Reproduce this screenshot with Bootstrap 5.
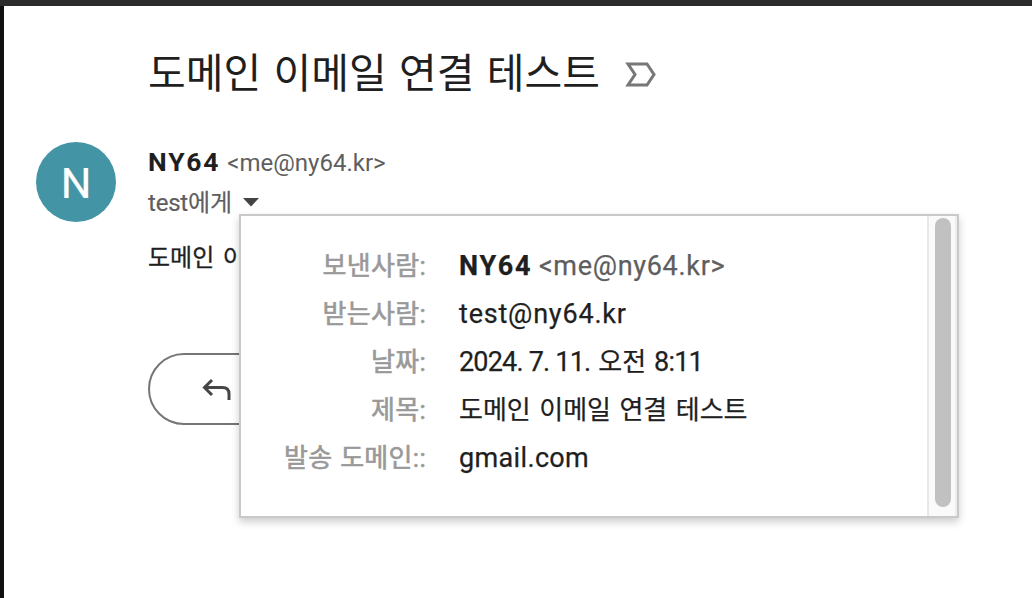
<!DOCTYPE html>
<html lang="ko">
<head>
<meta charset="utf-8">
<meta name="viewport" content="width=device-width, initial-scale=1">
<title>도메인 이메일 연결 테스트</title>
<link href="https://cdn.jsdelivr.net/npm/bootstrap@5.3.0/dist/css/bootstrap.min.css" rel="stylesheet">
<style>
body{font-family:Roboto,"Noto Sans CJK KR",sans-serif;color:#1f1f1f}
.mail-window{height:598px;background:linear-gradient(#2c2c2c 6px,transparent 6px),linear-gradient(90deg,#12100e 4px,#fff 4px);padding:44px 0 0 36px}
.subject{height:60px;padding-left:112px;gap:25px}
.subject h1{font-size:41px;line-height:60px;font-weight:400;word-spacing:2.2px;white-space:nowrap}
.message{margin-top:38px;gap:32px}
.avatar{width:80px;height:80px;background:#4395a6;color:#fff;font-size:43px;line-height:82px;-webkit-text-stroke:.2px}
.sender{height:40px;line-height:40px;font-size:24px}
.sender strong{font-size:26.5px;font-weight:700;letter-spacing:1.8px}
.sender .muted{margin-left:1px}
.details strong{font-weight:700;letter-spacing:1.7px}
.muted{color:#5e5e5e}
.recipient{height:40px;line-height:40px;font-size:24px;color:#5e5e5e;gap:11px;padding-top:1px}
.recipient span{letter-spacing:-.2px;-webkit-text-stroke:.2px}
.message-text{font-size:24px;line-height:40px;margin-top:16px;word-spacing:2.5px;white-space:nowrap;-webkit-text-stroke:.3px}
.reply{width:210px;height:72px;border:2px solid #747775;margin-top:75px;padding:2px 0 0 52px}
.details{left:203px;top:72px;width:720px;height:304px;border:2px solid #c9c9c9;box-shadow:0 4px 8px rgba(0,0,0,.2);line-height:48px;font-size:27px}
.labels,.values{padding-top:26px}
.labels{width:185px;color:#999;font-size:26px;word-spacing:1px;-webkit-text-stroke:.6px}
.labels span{font-family:"Noto Sans CJK KR",sans-serif;letter-spacing:0}
.labels div{letter-spacing:.3px}
.values{-webkit-text-stroke:.25px;padding-left:9px}
.ko{font-size:26px;word-spacing:2px;letter-spacing:0}
.address{letter-spacing:.7px}
.recipient-address{letter-spacing:.8px}
.sent-date{letter-spacing:-.8px}
.sent-date .ko{margin:0 2px}
.domain{letter-spacing:.35px}
.track{width:30px;background:#fafafa;border-left:2px solid #e8e8e8;border-right:2px solid #ededed;padding:2px 0 9px 6px}
.thumb{width:16px;height:289px;background:#c1c1c1}
</style>
</head>
<body class="overflow-hidden">
<main class="mail-window">
  <header class="subject d-flex align-items-center">
    <h1 class="m-0">도메인 이메일 연결 테스트</h1>
    <svg width="31" height="25" viewBox="0 0 31 25" fill="none" stroke="#777" stroke-width="3"><path d="M3 2h19l7 10.500-7 10.500H3l7-10.500z"/></svg>
  </header>
  <article class="message d-flex position-relative">
    <div class="avatar rounded-circle text-center flex-shrink-0">N</div>
    <div>
      <div class="sender text-nowrap"><strong>NY64</strong> <span class="muted">&lt;me@ny64.kr&gt;</span></div>
      <div class="recipient d-flex align-items-center"><span>test에게</span><svg width="16" height="9" viewBox="0 0 16 9"><path d="M0 0h16L8 8.500z" fill="#444"/></svg></div>
      <div class="message-text">도메인 이</div>
      <div class="reply rounded-pill d-flex align-items-center"><svg width="30" height="24" viewBox="0 0 30 24" fill="none" stroke="#444746" stroke-width="3"><path d="M10 2 2.500 9.500l7.500 7.500M2.500 9.500h18q6.500 0 6.500 6.500v6"/></svg></div>
    </div>
    <section class="details position-absolute bg-white d-flex">
      <div class="labels text-end text-nowrap">
        <div>보낸사람:</div><div>받는사람:</div><div>날짜:</div><div>제목:</div><div>발송 도메인::</div>
      </div>
      <div class="values flex-grow-1 text-nowrap ms-4">
        <div><strong>NY64</strong> <span class="address muted">&lt;me@ny64.kr&gt;</span></div>
        <div class="recipient-address">test@ny64.kr</div>
        <div class="sent-date">2024. 7. 11. <span class="ko">오전</span> 8:11</div>
        <div class="ko">도메인 이메일 연결 테스트</div>
        <div class="domain">gmail.com</div>
      </div>
      <div class="track"><div class="thumb rounded-pill"></div></div>
    </section>
  </article>
</main>
<script src="https://cdn.jsdelivr.net/npm/bootstrap@5.3.0/dist/js/bootstrap.bundle.min.js"></script>
</body>
</html>
